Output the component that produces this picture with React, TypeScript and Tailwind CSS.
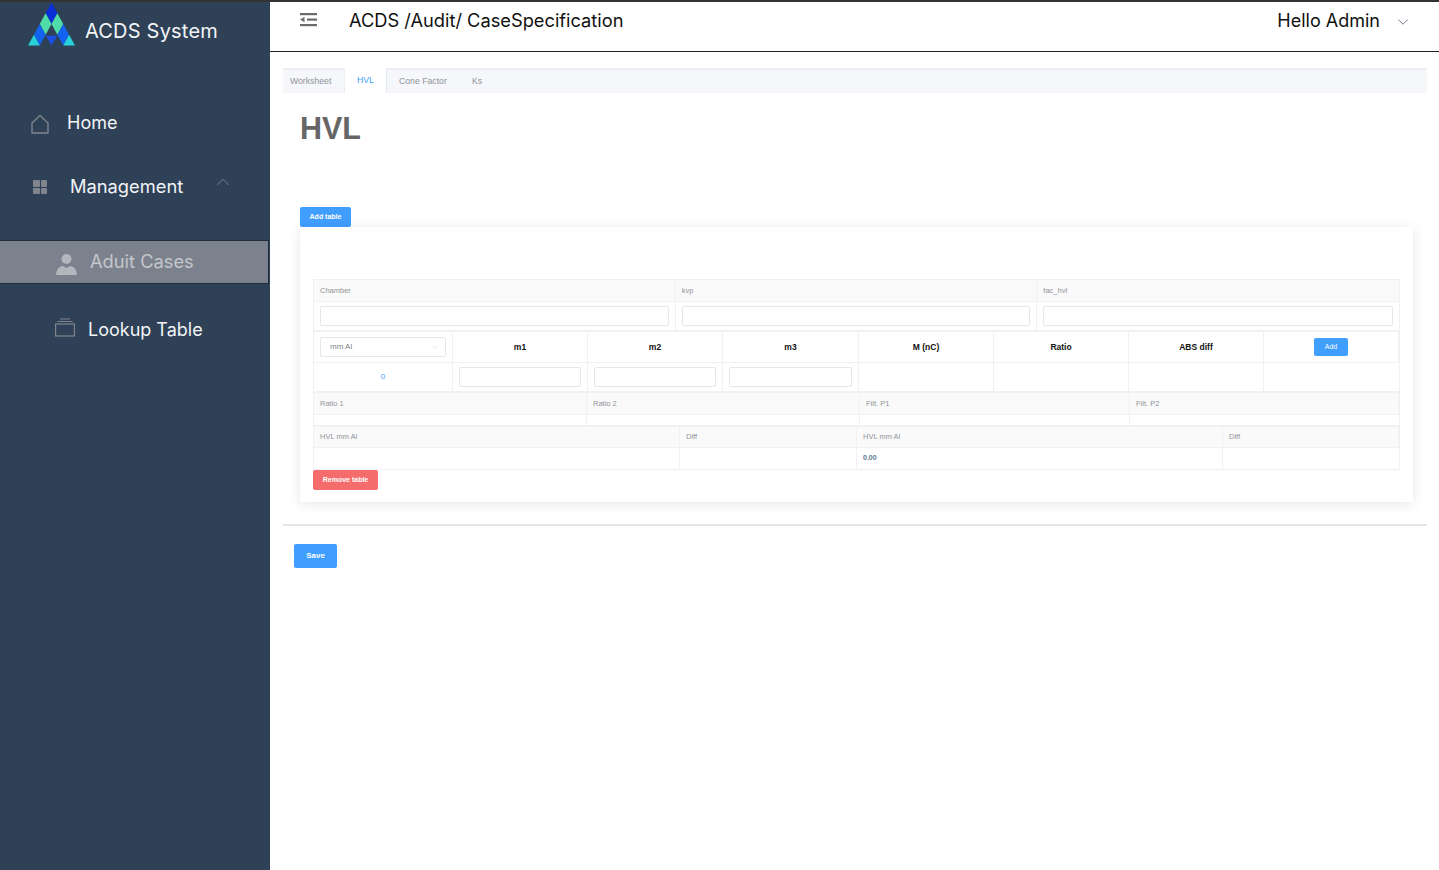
import React from 'react';
import { ChevronDown, ChevronUp } from 'lucide-react';

const inter = 'font-["Inter",sans-serif]';

const Logo = () => (
  <svg width="47" height="46" viewBox="0 0 48 46" className="shrink-0 -mt-[3px]">
    <polygon points="24,1 30,12 24,23 18,12" fill="#0b2fd6" />
    <polygon points="18,12 24,23 18,34 12,23" fill="#4fdca8" />
    <polygon points="30,12 36,23 30,34 24,23" fill="#4fdca8" />
    <polygon points="12,23 18,34 12,45 6,34" fill="#1463f0" />
    <polygon points="36,23 42,34 36,45 30,34" fill="#1463f0" />
    <polygon points="6,34 12,45 0,45" fill="#27d3d8" />
    <polygon points="42,34 48,45 36,45" fill="#27d3d8" />
    <polygon points="18,35 30,35 24,45" fill="#1a4fe0" />
  </svg>
);

const HeadCell = ({ children }: { children?: React.ReactNode }) => (
  <div className="flex items-center px-[6px] bg-[#fafafa] border-r border-b border-[#f0f0f5] text-[7.5px] text-[#909399] last:border-r-0">
    {children}
  </div>
);

const Cell = ({ children, className = '' }: { children?: React.ReactNode; className?: string }) => (
  <div className={`flex items-center justify-center border-r border-b border-[#f0f0f5] last:border-r-0 ${className}`}>
    {children}
  </div>
);

const Field = () => <div className="w-full h-[20px] bg-white border border-[#e4e7ed] rounded-[2px]" />;

const App: React.FC = () => {
  return (
    <div className={`flex min-h-[870px] bg-white border-t-2 border-[#333333] ${inter}`}>
      <aside className="w-[270px] shrink-0 bg-[#2f4156] text-white">
        <div className="flex items-center gap-[10px] pl-[28px] h-[46px]">
          <Logo />
          <span className="text-[20px] tracking-[0.2px] text-[#f2f4f6] mt-[11px]">ACDS System</span>
        </div>

        <div className="mt-[52px] flex items-center h-[44px] pl-[31px]">
          <svg width="18" height="20" viewBox="0 0 18 20" fill="none" stroke="#80858d" strokeWidth="1.4" className="mt-[4px]">
            <path d="M1 9 9 1.5 17 9V19H1Z" strokeLinejoin="round" />
          </svg>
          <span className="ml-[18px] text-[18px] text-[#f2f4f6]">Home</span>
        </div>

        <div className="mt-[21px] flex items-center h-[44px] pl-[33px]">
          <div className="grid grid-cols-2 gap-[1px] w-[14px] h-[14px]">
            <div className="bg-[#80858d] rounded-[1px]" />
            <div className="bg-[#80858d] rounded-[1px]" />
            <div className="bg-[#80858d] rounded-[1px]" />
            <div className="bg-[#80858d] rounded-[1px]" />
          </div>
          <span className="ml-[23px] text-[18.3px] text-[#f2f4f6]">Management</span>
          <ChevronUp size={22} strokeWidth={1} color="#80858d" className="ml-[29px] -mt-[10px]" />
        </div>

        <div className="mt-[31px] flex items-center h-[44px] pl-[56px] mr-[1px] bg-[#7c828d] border-y border-r border-[#1f2b3a]">
          <svg width="21" height="22" viewBox="0 0 21 22" fill="#b3b6bc" className="mt-[3px]">
            <circle cx="10.5" cy="6" r="5" />
            <path d="M0 22C.5 15.5 3.5 13.5 7 13l3.5 2 3.5-2c3.500.5 6.500 2.500 7 9Z" />
          </svg>
          <span className="ml-[13px] text-[18.3px] text-[#c3c6cb]">Aduit Cases</span>
        </div>

        <div className="mt-[23px] flex items-center h-[44px] pl-[55px]">
          <svg width="20" height="20" viewBox="0 0 20 20" fill="none" stroke="#80858d" strokeWidth="1.2" className="-mt-[3px]">
            <rect x="0.600" y="6" width="18.800" height="12" />
            <path d="M2.500 3.500H17.500M5 1H15" />
          </svg>
          <span className="ml-[13px] text-[18px] text-[#f2f4f6]">Lookup Table</span>
        </div>
      </aside>

      <main className="flex-1 min-w-0">
        <header className="flex items-start h-[50px] border-b border-[#222222] pl-[30px] pr-[27px]">
          <svg width="17" height="14" viewBox="0 0 17 14" fill="#6b6b6b" className="mt-[11px]">
            <rect y="0" width="17" height="2.200" />
            <rect x="7" y="5.500" width="10" height="2.200" />
            <polygon points="0,6.600 4.500,4 4.500,9.200" />
            <rect y="11" width="17" height="2.200" />
          </svg>
          <div className="ml-[32px] mt-[6px] text-[18.25px] leading-[24px] text-[#111111]">ACDS /Audit/ CaseSpecification</div>
          <div className="ml-auto mt-[7px] text-[18px] leading-[24px] text-[#111111]">Hello Admin</div>
          <ChevronDown size={18} strokeWidth={1.1} color="#55606e" className="ml-[14px] mt-[11px]" />
        </header>

        <div className="px-[13px] pt-[16px] pr-[12px] font-['Liberation_Sans',sans-serif]">
          <nav className="flex h-[25px] bg-[#f5f7fa] border-t-2 border-[#eceff3] text-[8.700px] text-[#909399]">
            <div className="flex items-center px-[7px] border-r border-[#eceff3] w-[62px]">Worksheet</div>
            <div className="flex items-center justify-center w-[42px] -mt-[2px] bg-white border-r border-[#e4e7ed] text-[#409eff]">HVL</div>
            <div className="flex items-center pl-[12px] w-[85px]">Cone Factor</div>
            <div className="flex items-center">Ks</div>
          </nav>

          <h1 className="mt-[15px] ml-[17px] text-[30.5px] leading-[40px] font-bold text-[#666666]">HVL</h1>

          <button className="block mt-[59px] ml-[17px] w-[51px] h-[20px] bg-[#409eff] rounded-[2px] text-[7px] font-bold text-white">
            Add table
          </button>

          <section className="ml-[17px] mr-[14px] h-[275px] pt-[52px] px-[13px] bg-white shadow-[0_2px_12px_rgba(0,0,0,0.1)]">
            <div className="border-l border-r border-t border-[#f0f0f5]">
              <div className="grid grid-cols-3 h-[22px]">
                <HeadCell>Chamber</HeadCell>
                <HeadCell>kvp</HeadCell>
                <HeadCell>fac_hvl</HeadCell>
              </div>
              <div className="grid grid-cols-3 h-[30px] border-b border-[#f0f0f5]">
                <Cell className="px-[6px]"><Field /></Cell>
                <Cell className="px-[6px]"><Field /></Cell>
                <Cell className="px-[6px]"><Field /></Cell>
              </div>

              <div className="grid grid-cols-[139px_135px_135px_136px_135px_135px_135px_1fr] grid-rows-[31px_29px] text-[8.500px] font-bold text-[#111111]">
                <Cell className="px-[6px]">
                  <div className="w-full h-[20px] flex items-center justify-between pl-[9px] pr-[5px] border border-[#e4e7ed] rounded-[2px] text-[8px] font-normal text-[#7f8389]">
                    mm Al
                    <ChevronDown size={10} strokeWidth={1} color="#c0c4cc" />
                  </div>
                </Cell>
                <Cell>m1</Cell>
                <Cell>m2</Cell>
                <Cell>m3</Cell>
                <Cell>M (nC)</Cell>
                <Cell>Ratio</Cell>
                <Cell>ABS diff</Cell>
                <Cell>
                  <button className="w-[34px] h-[18px] bg-[#409eff] rounded-[2px] text-[7px] font-normal text-white">Add</button>
                </Cell>
                <Cell className="text-[8px] font-normal text-[#409eff]">0</Cell>
                <Cell className="px-[6px]"><Field /></Cell>
                <Cell className="px-[6px]"><Field /></Cell>
                <Cell className="px-[6px]"><Field /></Cell>
                <Cell />
                <Cell />
                <Cell />
                <Cell />
              </div>

              <div className="grid grid-cols-[273px_273px_270px_1fr] grid-rows-[22px_11px] border-t border-[#f0f0f5]">
                <HeadCell>Ratio 1</HeadCell>
                <HeadCell>Ratio 2</HeadCell>
                <HeadCell>Filt. P1</HeadCell>
                <HeadCell>Filt. P2</HeadCell>
                <Cell />
                <Cell />
                <Cell />
                <Cell />
              </div>

              <div className="grid grid-cols-[366px_177px_366px_1fr] grid-rows-[21px_22px] border-t border-[#f0f0f5]">
                <HeadCell>HVL mm Al</HeadCell>
                <HeadCell>Diff</HeadCell>
                <HeadCell>HVL mm Al</HeadCell>
                <HeadCell>Diff</HeadCell>
                <Cell />
                <Cell />
                <Cell className="justify-start px-[6px] text-[7px] font-bold text-[#5c7a8a]">0.00</Cell>
                <Cell />
              </div>
            </div>

            <button className="block w-[65px] h-[20px] bg-[#f56c6c] rounded-[2px] text-[7px] font-bold text-white">
              Remove table
            </button>
          </section>

          <hr className="mt-[22px] border-0 h-[2px] bg-[#e4e5e8]" />

          <button className="block mt-[18px] ml-[11px] w-[43px] h-[24px] bg-[#409eff] rounded-[2px] text-[8px] font-bold text-white">
            Save
          </button>
        </div>
      </main>
    </div>
  );
};

export default App;
